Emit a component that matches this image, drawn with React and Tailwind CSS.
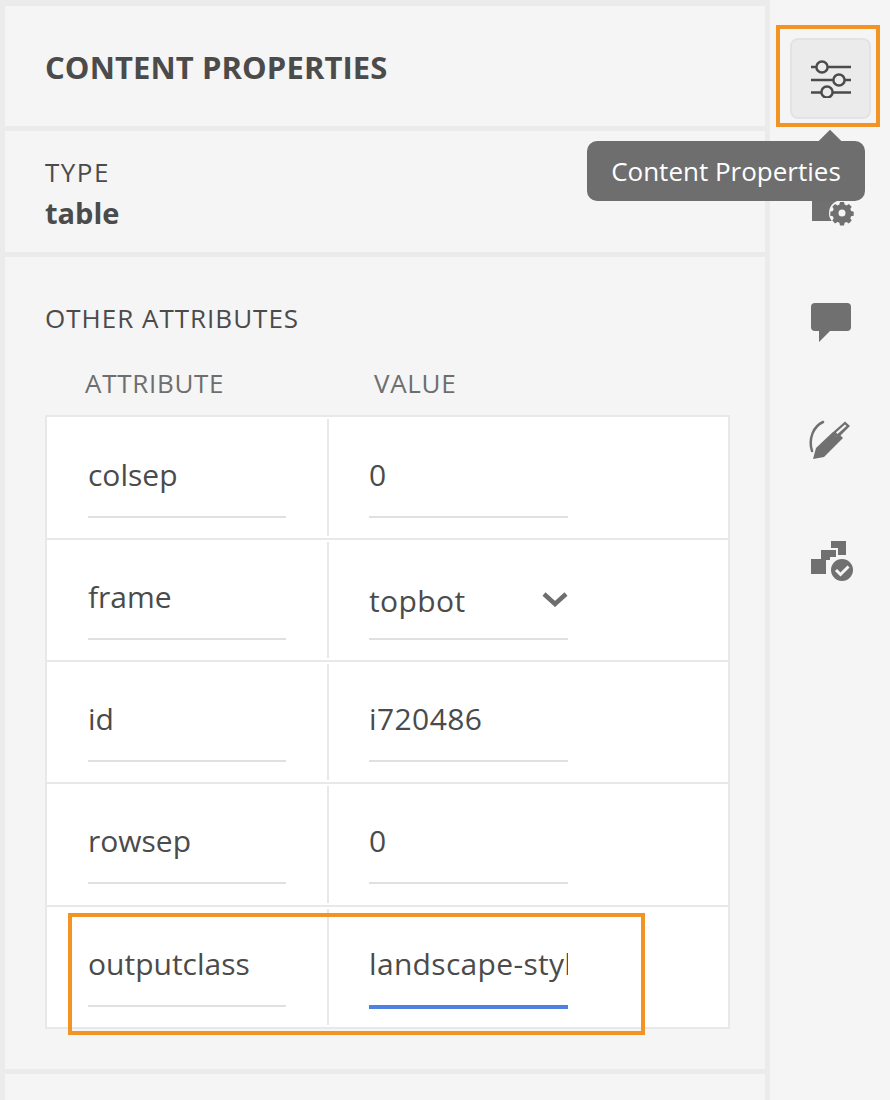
import React from 'react';

const rows = [
    { name: 'colsep', value: '0', height: 'h-[123px]', top: 'pt-[40px]', field: 'h-[61px]' },
    { name: 'frame', value: 'topbot', select: true, height: 'h-[122px]', top: 'pt-[39px]', field: 'h-[61px]' },
    { name: 'id', value: 'i720486', height: 'h-[122px]', top: 'pt-[39px]', field: 'h-[61px]' },
    { name: 'rowsep', value: '0', height: 'h-[123px]', top: 'pt-[39px]', field: 'h-[61px]' },
    { name: 'outputclass', value: 'landscape-style', focused: true, height: 'h-[120px]', top: 'pt-[39px]', field: 'h-[61px]' },
];

function SlidersIcon() {
    return (
        <svg width="42" height="38" viewBox="0 0 42 38" fill="none" stroke="#4b4b4b" strokeWidth="2.500">
            <path d="M1 7h40M1 20h40M1 32.500h40" />
            <circle cx="12" cy="7" r="5.600" fill="#ebebeb" />
            <circle cx="29" cy="20" r="5.600" fill="#ebebeb" />
            <circle cx="17" cy="32" r="5.600" fill="#ebebeb" />
        </svg>
    );
}

function FolderGearIcon() {
    return (
        <svg width="44" height="32" viewBox="0 0 44 32" fill="#707070">
            <path d="M2 2h26v24H2z" />
            <circle cx="32" cy="18" r="13" fill="#f5f5f5" />
            <path d="M30 7h4l.6 2.600 2 .8 2.300-1.400 2.800 2.800-1.400 2.300.8 2 2.600.6v4l-2.600.6-.8 2 1.400 2.300-2.800 2.800-2.300-1.400-2 .8-.6 2.600h-4l-.6-2.600-2-.8-2.300 1.400-2.800-2.800 1.400-2.300-.8-2-2.600-.6v-4l2.600-.6.8-2-1.400-2.300 2.800-2.800 2.300 1.400 2-.8zM32 14.500a3.500 3.500 0 1 0 0 7 3.500 3.500 0 0 0 0-7z" fillRule="evenodd" />
        </svg>
    );
}

function CommentIcon() {
    return (
        <svg width="42" height="42" viewBox="0 0 42 42" fill="#707070">
            <path d="M5 1h32a4 4 0 0 1 4 4v20a4 4 0 0 1-4 4H20L9 40V29H5a4 4 0 0 1-4-4V5a4 4 0 0 1 4-4z" />
        </svg>
    );
}

function PenIcon() {
    return (
        <svg width="44" height="42" viewBox="0 0 44 42" fill="none">
            <path d="M15 2C6 6 0 18 4 31" stroke="#707070" strokeWidth="2.500" strokeLinecap="round" />
            <path d="M5 39l3-11 19-18 8 8-19 19z" fill="#707070" />
            <path d="M23 11l13-11 6 5-13 12" fill="#f5f5f5" />
            <path d="M24 13L37 1.500l5 4.500L30 18z" fill="#707070" />
            <path d="M28 12.500l9-8 1.500 1.500-9 8z" fill="#f5f5f5" />
        </svg>
    );
}

function ReviewIcon() {
    return (
        <svg width="44" height="42" viewBox="0 0 44 42" fill="#707070">
            <path d="M21 1h15v14h-8v-7h-7z" />
            <path d="M11 10h15v7h-6v3h-9z" />
            <path d="M1 19h15v15H1z" />
            <circle cx="32" cy="30" r="12" fill="#f5f5f5" />
            <circle cx="32" cy="30" r="11" />
            <path d="M26 30l4.500 4.500 8-8" fill="none" stroke="#f5f5f5" strokeWidth="3" />
        </svg>
    );
}

function AttributeRow({ row, last }) {
    return (
        <div className={`flex ${row.height} ${last ? '' : 'border-b-2 border-[#e8e8e8]'}`}>
            <div className={`w-[282px] shrink-0 pl-[41px] ${row.top} border-r-2 border-[#e8e8e8] my-[2px]`}>
                <div className={`w-[198px] ${row.field} border-b-2 border-[#e0e0e0] text-[30px] leading-[36px] -mt-[2px]`}>
                    {row.name}
                </div>
            </div>
            <div className={`pl-[40px] ${row.top}`}>
                {row.focused ? (
                    <div className="w-[199px] h-[63px] border-b-[4px] border-[#4f81e3] overflow-hidden whitespace-nowrap text-[30px] leading-[36px] tracking-[0.32px]">
                        {row.value}
                    </div>
                ) : (
                    <div className={`w-[199px] ${row.field} border-b-2 border-[#e0e0e0] whitespace-nowrap text-[30px] leading-[36px] tracking-[0.4px] flex items-start justify-between`}>
                        <span className={row.select ? 'mt-[4px]' : ''}>{row.value}</span>
                        {row.select && (
                            <svg width="26" height="16" viewBox="0 0 26 16" fill="none" stroke="#6e6e6e" strokeWidth="4.500" className="mt-[12px]">
                                <path d="M2 3l11 10L24 3" />
                            </svg>
                        )}
                    </div>
                )}
            </div>
        </div>
    );
}

export default function App() {
    return (
        <div className="relative flex w-[890px] h-[1100px] overflow-hidden bg-[#ebebeb] text-[#4b4b4b]" style={{ fontFamily: '"Open Sans", sans-serif' }}>
            <div className="w-[760px] ml-[5px] pt-[6px] flex flex-col gap-[5px] shrink-0">
                <div className="h-[120px] bg-[#f5f5f5] pl-[40px] flex items-center">
                    <h1 className="text-[31px] font-bold leading-none mt-[3px] tracking-[0.1px]">CONTENT PROPERTIES</h1>
                </div>
                <div className="h-[121px] bg-[#f5f5f5] pl-[40px] pt-[26px]">
                    <div className="text-[26px] leading-[30px] tracking-[1.5px]">TYPE</div>
                    <div className="text-[29px] font-bold leading-[40px] mt-[6px]">table</div>
                </div>
                <div className="h-[812px] bg-[#f5f5f5] pl-[40px] pt-[46px]">
                    <div className="text-[26px] leading-[30px] tracking-[1px]">OTHER ATTRIBUTES</div>
                    <div className="flex text-[#6e6e6e] text-[26px] leading-[30px] mt-[35px] pl-[40px] tracking-[0.7px]">
                        <span className="w-[289px]">ATTRIBUTE</span>
                        <span>VALUE</span>
                    </div>
                    <div className="w-[685px] mt-[17px] border-2 border-[#e8e8e8] bg-white">
                        {rows.map((row, i) => (
                            <AttributeRow key={row.name} row={row} last={i === rows.length - 1} />
                        ))}
                    </div>
                </div>
                <div className="flex-1 bg-[#f5f5f5]" />
            </div>

            <div className="ml-[5px] flex-1 bg-[#f5f5f5] flex flex-col items-center pt-[38px] pl-[1px]">
                <div className="w-[81px] h-[81px] rounded-[8px] bg-[#ebebeb] border-2 border-[#e3e3e3] flex items-center justify-center">
                    <SlidersIcon />
                </div>
                <div className="mt-[76px] ml-[2px]"><FolderGearIcon /></div>
                <div className="mt-[75px]"><CommentIcon /></div>
                <div className="mt-[76px] -ml-[1px]"><PenIcon /></div>
                <div className="mt-[78px] ml-[2px]"><ReviewIcon /></div>
            </div>

            {/* callout boxes */}
            <div className="absolute left-[776px] top-[25px] w-[104px] h-[102px] border-[4px] border-[#f29423]" />
            <div className="absolute left-[68px] top-[913px] w-[577px] h-[122px] border-[4px] border-[#f29423]" />

            {/* tooltip */}
            <div className="absolute left-[587px] top-[141px] w-[278px] h-[60px] rounded-[10px] bg-[#6e6e6e] text-white text-[26px] flex items-center justify-center">
                Content Properties
            </div>
            <div className="absolute left-[822px] top-[133px] w-[16px] h-[16px] rotate-45 bg-[#6e6e6e]" />
        </div>
    );
}
